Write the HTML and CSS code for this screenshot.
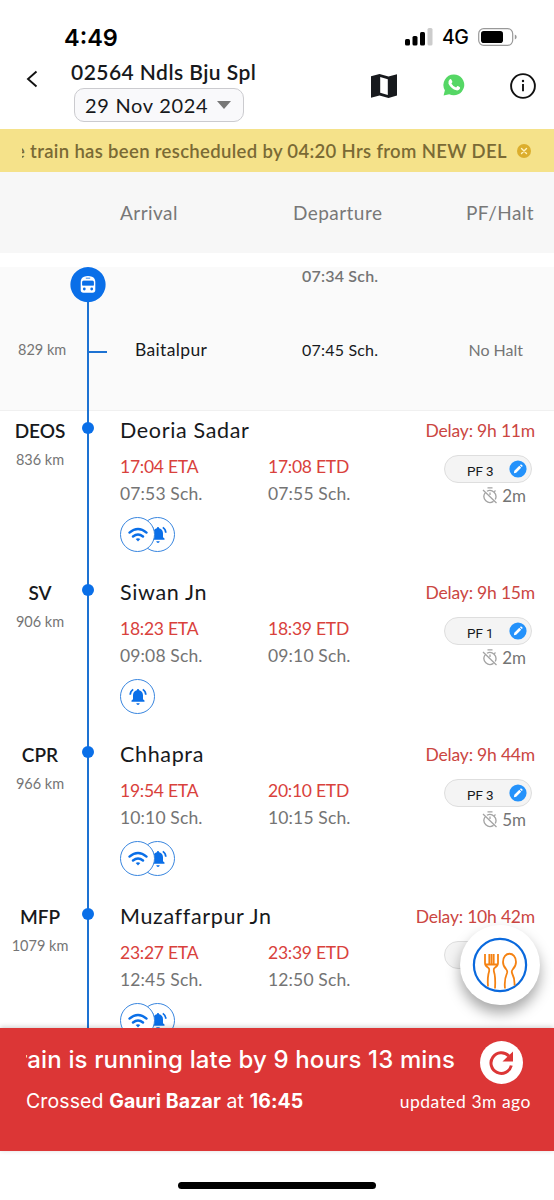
FILE: index.html
```
<!DOCTYPE html>
<html lang="en">
<head>
<meta charset="utf-8">
<title>02564 Ndls Bju Spl</title>
<link rel="stylesheet" href="styles.css">
</head>
<body>
<svg class="defs" aria-hidden="true">
  <symbol id="wifi" viewBox="0 0 20 16">
    <path d="M1.5 5.6Q10 -1.5 18.500 5.600M5 9.500Q10 5.300 15 9.500" fill="none" stroke="currentColor" stroke-width="2.400" stroke-linecap="round"/>
    <path d="M7.700 12.100Q10 10.300 12.300 12.100L10 14.600Z" fill="currentColor"/>
  </symbol>
  <symbol id="bell" viewBox="0 0 18 18">
    <path d="M9 1Q10 1 10.200 2.200C13 2.900 14 5 14 7.500V11.200L15.500 12.500V13.700H2.500V12.500L4 11.200V7.500C4 5 5 2.900 7.800 2.200Q8 1 9 1ZM7.200 15.300H10.800Q10.300 17 9 17T7.200 15.300Z" fill="currentColor"/>
    <path d="M1.200 6.800Q1.300 3.300 4.200 1.400M16.800 6.800Q16.700 3.300 13.800 1.400" fill="none" stroke="currentColor" stroke-width="1.700"/>
  </symbol>
  <symbol id="edit" viewBox="0 0 18 18">
    <circle cx="9" cy="9" r="8.600" fill="#2492fb"/>
    <path d="M4.900 13.200L5.300 10.800L10.300 5.800L12.200 7.700L7.200 12.700ZM10.900 5.200L11.600 4.500Q12.200 4.200 12.700 4.700L13.300 5.300Q13.800 5.900 13.400 6.500L12.800 7.100Z" fill="#fff"/>
  </symbol>
  <symbol id="timer" viewBox="0 0 16 17">
    <g fill="none" stroke="#a3a3a3" stroke-width="1.300"><path d="M5.500 .8H10.500M1 3L14.500 16M12.400 4.600L13.500 3.500M4.900 4.300A6.100 6.100 0 0 1 13.200 12.500M11.500 14.400A6.100 6.100 0 0 1 3 6M8 5.500V8"/></g>
  </symbol>
</svg>
<div class="screen">
  <div class="status">
    <span class="clock">4:49</span>
    <svg class="signal" viewBox="0 0 28 18"><rect y="11" width="5" height="6.500" rx="1.500"/><rect x="7.500" y="8" width="5" height="9.500" rx="1.500"/><rect x="15" y="4" width="5" height="13.500" rx="1.500"/><rect x="22.500" width="5" height="17.500" rx="1.500" fill="#ccc"/></svg>
    <span class="net">4G</span>
    <svg class="battery" viewBox="0 0 40 18"><rect x=".7" y=".7" width="34" height="16.600" rx="5" fill="none" stroke="#999" stroke-width="1.200"/><rect x="3" y="3" width="22" height="12" rx="2.800"/><path d="M36.800 6.500Q38.700 7.200 38.700 9T36.800 11.500Z" fill="#999"/></svg>
  </div>

  <header class="bar">
    <svg class="back" viewBox="0 0 12 18"><path d="M10.500 1.500L2 9L10.500 16.500" fill="none" stroke="#111" stroke-width="1.900"/></svg>
    <div class="heading">
      <h1>02564 Ndls Bju Spl</h1>
      <button class="date"><span>29 Nov 2024</span><i class="caret"></i></button>
    </div>
    <svg class="map" viewBox="0 0 26 24"><path d="M0 2.200L8.500 0L17.500 2.600L26 .2V21.600L17.500 24L8.500 21.400L0 23.800Z" fill="#17191d"/><path d="M9.200 3L16.800 5.200V21L9.200 18.800Z" fill="#fff"/></svg>
    <svg class="whatsapp" viewBox="0 0 22 22"><path d="M11 .5A10.400 10.400 0 1 1 6.200 20.200L.6 21.500L1.900 16.200A10.400 10.400 0 0 1 11 .5Z" fill="#55d765"/><path d="M6.900 5.300Q7.800 4.800 8.300 5.500L9.400 7.700Q9.500 8.300 8.400 9.500Q10.100 12.500 13.100 13.600L14.400 12.100Q14.800 11.900 16.900 13.200Q17.400 13.600 16.700 15Q15.600 16.700 13.400 16.300Q8.200 15.200 5.500 9.800Q4.600 7.100 6.900 5.300Z" fill="#fff"/></svg>
    <svg class="info" viewBox="0 0 26 26"><circle cx="13" cy="13" r="11.900" fill="none" stroke="#111" stroke-width="1.900"/><path d="M13 11V18.300" stroke="#111" stroke-width="1.900"/><circle cx="13" cy="8" r="1.200" fill="#111"/></svg>
  </header>

  <div class="notice">
    <div class="ticker"><span>e train has been rescheduled by 04:20 Hrs from NEW DEL</span></div>
    <svg class="dismiss" viewBox="0 0 14 14"><circle cx="7" cy="7" r="7" fill="#dcae2d"/><path d="M4.500 4.500L9.500 9.500M9.500 4.500L4.500 9.500" stroke="#fff3bf" stroke-width="1.400" stroke-linecap="round"/></svg>
  </div>

  <div class="columns"><span class="c-arr">Arrival</span><span class="c-dep">Departure</span><span class="c-pf">PF/Halt</span></div>

  <main class="list">
    <section class="passed">
      <div class="track"></div>
      <svg class="train" viewBox="0 0 36 36"><path d="M10 1.900Q18 -1.900 26 1.900A17.600 17.600 0 1 1 10 1.900Z" fill="#0a6fe8"/><path d="M14 9.700Q18 8.300 22 9.700Q25.300 11 25.300 15V23Q25.300 25.700 22.500 25.700H13.500Q10.700 25.700 10.700 23V15Q10.700 11 14 9.700Z" fill="#fff"/><path d="M15.800 11.200H20.200M13.500 14H22.500Q23.500 14 23.500 15V18.200H12.500V15Q12.500 14 13.500 14Z" fill="#0a6fe8" stroke="#0a6fe8" stroke-width=".8"/><circle cx="14.300" cy="22" r="1.400" fill="#0a6fe8"/><circle cx="21.700" cy="22" r="1.400" fill="#0a6fe8"/></svg>
      <div class="mid first"><span class="mid-dep">07:34 Sch.</span></div>
      <div class="mid second"><span class="km">829 km</span><i class="tick"></i><span class="mid-name">Baitalpur</span><span class="mid-dep">07:45 Sch.</span><span class="mid-halt">No Halt</span></div>
    </section>

    <section class="stop">
      <div class="code"><b>DEOS</b><span>836 km</span></div><div class="rail"><i></i></div>
      <div class="body">
        <div class="top"><h2>Deoria Sadar</h2><span class="delay">Delay: 9h 11m</span></div>
        <div class="times"><div class="time"><em>17:04 ETA</em><span>07:53 Sch.</span></div><div class="time"><em>17:08 ETD</em><span>07:55 Sch.</span></div>
          <div class="side"><div class="pf"><span>PF 3</span><svg><use href="#edit"/></svg></div><div class="halt"><svg><use href="#timer"/></svg>2m</div></div></div>
        <div class="badges"><span class="badge wifi"><svg><use href="#wifi"/></svg></span><span class="badge bell"><svg><use href="#bell"/></svg></span></div>
      </div>
    </section>
    <section class="stop">
      <div class="code"><b>SV</b><span>906 km</span></div><div class="rail"><i></i></div>
      <div class="body">
        <div class="top"><h2>Siwan Jn</h2><span class="delay">Delay: 9h 15m</span></div>
        <div class="times"><div class="time"><em>18:23 ETA</em><span>09:08 Sch.</span></div><div class="time"><em>18:39 ETD</em><span>09:10 Sch.</span></div>
          <div class="side"><div class="pf"><span>PF 1</span><svg><use href="#edit"/></svg></div><div class="halt"><svg><use href="#timer"/></svg>2m</div></div></div>
        <div class="badges"><span class="badge bell"><svg><use href="#bell"/></svg></span></div>
      </div>
    </section>
    <section class="stop">
      <div class="code"><b>CPR</b><span>966 km</span></div><div class="rail"><i></i></div>
      <div class="body">
        <div class="top"><h2>Chhapra</h2><span class="delay">Delay: 9h 44m</span></div>
        <div class="times"><div class="time"><em>19:54 ETA</em><span>10:10 Sch.</span></div><div class="time"><em>20:10 ETD</em><span>10:15 Sch.</span></div>
          <div class="side"><div class="pf"><span>PF 3</span><svg><use href="#edit"/></svg></div><div class="halt"><svg><use href="#timer"/></svg>5m</div></div></div>
        <div class="badges"><span class="badge wifi"><svg><use href="#wifi"/></svg></span><span class="badge bell"><svg><use href="#bell"/></svg></span></div>
      </div>
    </section>
    <section class="stop">
      <div class="code"><b>MFP</b><span>1079 km</span></div><div class="rail"><i></i></div>
      <div class="body">
        <div class="top"><h2>Muzaffarpur Jn</h2><span class="delay">Delay: 10h 42m</span></div>
        <div class="times"><div class="time"><em>23:27 ETA</em><span>12:45 Sch.</span></div><div class="time"><em>23:39 ETD</em><span>12:50 Sch.</span></div>
          <div class="side"><div class="pf"></div></div></div>
        <div class="badges"><span class="badge wifi"><svg><use href="#wifi"/></svg></span><span class="badge bell"><svg><use href="#bell"/></svg></span></div>
      </div>
    </section>
  </main>

  <button class="food" aria-label="Order food"><svg viewBox="0 0 56 56"><circle cx="28" cy="28" r="26.100" fill="#fff" stroke="#0a69dd" stroke-width="2.200"/><g fill="none" stroke="#f58212" stroke-width="1.800" stroke-linejoin="round"><path d="M13 17V26Q13 29 16.500 31Q17.500 31.800 17.200 34Q15.200 40 16 49.500M26 17V26Q26 29 22.500 31Q21.500 31.800 21.800 34Q23.800 40 23 51.500M17.300 17V27.500M21.700 17V27.500M19.500 17V27.500M13 27.500H26"/><path d="M33 51.500Q32 43 35 36Q35.800 34 34 32Q31 29 31 25C31 14 44 14 44 25Q44 29 41 32Q39.200 34 40 36Q43 42 42.500 48.500"/></g></svg></button>

  <footer class="live">
    <div class="row"><div class="headline"><span>rain is running late by 9 hours 13 mins</span></div>
      <svg class="refresh" viewBox="0 0 43 43"><circle cx="21.500" cy="21.500" r="21.500" fill="#fff"/><path d="M28.800 15A10.300 10.300 0 1 0 31.300 24.500" fill="none" stroke="#dc3636" stroke-width="3"/><path d="M33 10.500V20.500H22.500Z" fill="#dc3636"/></svg></div>
    <div class="row detail"><p>Crossed <b>Gauri Bazar</b> at <b>16:45</b></p><span class="updated">updated 3m ago</span></div>
  </footer>
  <div class="home"><i></i></div>
</div>
</body>
</html>
```
FILE: styles.css
```
* { box-sizing: border-box; }
body { margin: 0; background: #fff; font-family: Lato, "Noto Sans", sans-serif; color: #17191c; }
h1, h2, p { margin: 0; font-weight: 400; }
button { margin: 0; padding: 0; border: 0; background: none; font: inherit; color: inherit; }
svg { display: block; flex: none; }
.defs { display: none; }
.screen { position: relative; width: 554px; height: 1200px; overflow: hidden; display: flex; flex-direction: column; white-space: nowrap; }

.status { height: 58px; padding: 16px 37px 0 64px; display: flex; align-items: center; flex: none; font-family: Inter, sans-serif; color: #000; }
.clock { flex: 1; font-size: 23.500px; font-weight: 600; }
.signal { width: 28px; height: 18px; }
.net { width: 28px; margin: 0 8px 0 9px; font-size: 19.500px; letter-spacing: -.5px; font-weight: 500; }
.battery { width: 40px; height: 18px; }
.status { padding-right: 36px; }

.bar { height: 71px; flex: none; padding: 3px 18px 0 26px; display: flex; align-items: flex-start; }
.back { width: 12px; height: 18px; margin-top: 9px; }
.heading { margin-left: 33px; width: 299px; }
h1 { font-size: 21px; line-height: 22px; margin-bottom: 5px; font-weight: 600; letter-spacing: .45px; }
.date { width: 170px; height: 34px; margin-left: 3px; border: 1.5px solid #cbcbcf; border-radius: 10px; background: #f9f9fb; display: flex; align-items: center; padding-left: 10px; font-size: 20px; letter-spacing: .85px; }
.date span { width: 133px; text-align: left; margin-left: 1px; margin-right: -1px; text-indent: -1px; letter-spacing: .95px; }
.date span { flex: none; width: 132px; text-indent: 0; letter-spacing: .7px; margin: 0; }
.caret { border: 7px solid transparent; border-top: 8px solid #777; border-bottom: 0; }
.map { width: 26px; height: 24px; margin: 13px 0 0 1px; }
.whatsapp { width: 22px; height: 22px; margin: 13px 0 0 46px; }
.info { width: 26px; height: 26px; margin: 12px 0 0 45px; }

.notice { height: 43px; flex: none; background: #f5e28a; padding: 0 23px 0 22px; display: flex; align-items: center; justify-content: space-between; color: #7a6a35; }
.ticker { width: 487px; overflow: hidden; font-size: 18.500px; font-weight: 600; letter-spacing: .33px; line-height: 28px; }
.ticker span { margin-left: -7px; }
.dismiss { width: 14px; height: 14px; }

.columns { height: 81px; flex: none; background: #f7f7f7; display: flex; align-items: center; padding-left: 120px; font-size: 19px; letter-spacing: .45px; color: #787878; }
.c-arr { width: 173px; }
.c-dep { width: 173px; }

.list { height: 775px; flex: none; overflow: hidden; padding-top: 14px; }
.passed { position: relative; height: 144px; background: #fafafa; border-bottom: 1px solid #f0f0f0; }
.track { position: absolute; left: 87px; top: 20px; width: 2px; height: 124px; background: #1d72d2; }
.train { position: absolute; left: 70px; top: 0; width: 36px; height: 36px; }
.mid { display: flex; align-items: center; height: 20px; font-size: 16px; letter-spacing: .2px; }
.mid.first { height: 16px; padding-left: 302px; font-weight: 600; color: #747474; }
.mid.second { margin-top: 55px; height: 22px; padding-left: 18px; }
.km { width: 71px; font-size: 14.500px; letter-spacing: 0; color: #757575; }
.tick { width: 18px; height: 2px; margin-top: 6px; background: #1d72d2; }
.mid-name { margin-left: 28px; width: 167px; font-size: 17.500px; letter-spacing: .35px; }
.mid-halt { margin-left: auto; padding-right: 31px; color: #757575; letter-spacing: 0; }

.stop { height: 162px; display: grid; grid-template-columns: 80px 16px 1fr; }
.code { padding-top: 9px; text-align: center; }
.code b { display: block; font-size: 19px; line-height: 22px; font-weight: 600; }
.code span { display: block; margin-top: 8px; font-size: 14.500px; line-height: 19px; color: #757575; }
.rail { display: flex; justify-content: center; padding-top: 11px; background: linear-gradient(#1d72d2, #1d72d2) 7px 0 / 2px 100% no-repeat; }
.rail i { width: 12px; height: 12px; border-radius: 50%; background: #0a6fe8; }
.body { padding: 6px 19px 0 24px; }
.top { display: flex; justify-content: space-between; height: 28px; line-height: 28px; }
h2 { font-size: 21.500px; line-height: 27px; letter-spacing: .65px; }
.delay { font-size: 17.500px; letter-spacing: -.2px; color: #cb4642; }
.times { display: flex; height: 62px; padding-top: 8px; }
.time { width: 148px; font-size: 17.500px; line-height: 27px; }
.time em, .time span { display: block; font-style: normal; }
.time em { color: #d9413c; letter-spacing: -.25px; }
.time span { color: #747474; letter-spacing: .15px; }
.side { margin-left: auto; width: 91px; height: 54px; padding-top: 2px; }
.pf { width: 88px; height: 28px; border: 1.500px solid #dedede; border-radius: 14px; background: #f4f4f4; display: flex; align-items: center; justify-content: space-between; padding: 0 4px 0 22px; font-size: 13.500px; font-family: Roboto, sans-serif; }
.pf span { padding-top: 3px; letter-spacing: -.1px; }
.pf svg { width: 18px; height: 18px; }
.halt { display: flex; align-items: center; justify-content: flex-end; gap: 4px; padding-right: 9px; height: 25px; font-size: 17px; color: #747474; }
.halt svg { width: 16px; height: 17px; }
.badges { display: flex; margin-top: 10px; }
.badge { width: 35px; height: 35px; border: 1px solid #3986df; border-radius: 50%; background: #fff; display: grid; place-items: center; color: #0a6fe8; }
.badge.wifi { position: relative; z-index: 1; }
.badge.wifi + .badge { margin-left: -15px; }
.badge.wifi svg { width: 20px; height: 16px; }
.badge.bell svg { width: 18px; height: 18px; }

.food { position: absolute; left: 460px; top: 925px; width: 80px; height: 80px; border-radius: 50%; background: #fff; box-shadow: 0 8px 14px rgba(0,0,0,.35); display: grid; place-items: center; }
.food svg { width: 56px; height: 56px; }

.live { position: relative; height: 123px; flex: none; background: #dc3636; box-shadow: 0 -1px 5px rgba(0,0,0,.2); color: #fff; padding: 13px 23px 0 26px; }
.row { display: flex; align-items: center; justify-content: space-between; }
.headline { width: 429px; overflow: hidden; font-family: Inter, sans-serif; font-size: 24px; line-height: 34px; font-weight: 500; letter-spacing: .14px; margin-top: -6px; }
.headline span { margin-left: -8px; }
.refresh { width: 43px; height: 43px; margin-right: 8px; }
.detail { height: 28px; margin-top: 3px; }
.detail p { font-family: Inter, sans-serif; font-size: 19.500px; letter-spacing: .1px; }
.updated { font-size: 17.500px; letter-spacing: .5px; }
.home { flex: 1; display: flex; justify-content: center; align-items: flex-start; padding-top: 31px; }
.home i { width: 198px; height: 7px; border-radius: 4px; background: #000; }
```
